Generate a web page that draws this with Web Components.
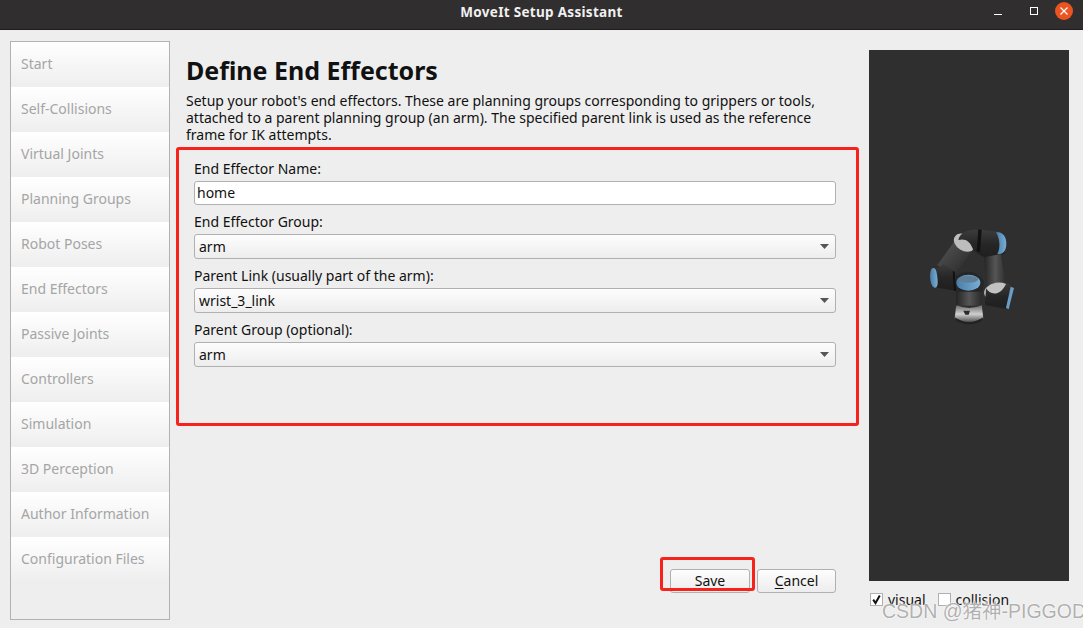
<!DOCTYPE html>
<html>
<head>
<meta charset="utf-8">
<title>MoveIt Setup Assistant</title>
<style>
    html, body { margin: 0; padding: 0; background: #eeeeee; }
    body { font-family: "Noto Sans", "Noto Sans CJK SC", sans-serif; }
</style>
</head>
<body>
<setup-app></setup-app>

<script>
const FONT = `"Noto Sans", "Noto Sans CJK SC", sans-serif`;

class TitleBar extends HTMLElement {
    constructor() {
        super();
        this.attachShadow({ mode: "open" }).innerHTML = `
            <style>
    :host { display: flex; height: 29px; background: #302e2e; border-bottom: 1px solid #1e1d1d; position: relative; align-items: center; justify-content: center; }
    .title { color: #f0f0f0; font: bold 13.5px ${FONT}; letter-spacing: .3px; margin-top: -5px; }
    .controls { position: absolute; right: 4px; top: 2px; display: flex; align-items: center; }
    .controls svg { display: block; }
</style>
            <div class="title"><slot></slot></div>
            <div class="controls">
                <svg width="107" height="22" viewBox="0 0 107 22">
                    <rect x="22" y="12" width="8" height="1" fill="#fff"/>
                    <rect x="58.5" y="5.5" width="7" height="7" fill="none" stroke="#fff" stroke-width="1"/>
                    <circle cx="92" cy="9" r="9" fill="#e95420"/>
                    <path d="M88.5 5.5 L95.5 12.5 M95.5 5.5 L88.5 12.5" stroke="#fff" stroke-width="1.2"/>
                </svg>
            </div>`;
    }
}
customElements.define("title-bar", TitleBar);

class NavItem extends HTMLElement {
    constructor() {
        super();
        this.attachShadow({ mode: "open" }).innerHTML = `
            <style>
    :host { display: flex; align-items: center; height: 45px; box-sizing: border-box; padding: 0 0 2px 10px; background: linear-gradient(#ffffff, #eeeeee); color: #a5a5a5; font-size: 14px; }
</style>
            <slot></slot>`;
    }
}
customElements.define("nav-item", NavItem);

class NavSide extends HTMLElement {
    constructor() {
        super();
        this.attachShadow({ mode: "open" }).innerHTML = `
            <style>
    :host { display: flex; flex-direction: column; width: 160px; height: 579px; box-sizing: border-box; border: 1px solid #b2b2b2; background: #eeeeee; flex: none; }
</style>
            <slot></slot>`;
    }
}
customElements.define("nav-side", NavSide);

class TextField extends HTMLElement {
    constructor() {
        super();
        this.attachShadow({ mode: "open" }).innerHTML = `
            <style>
    :host { display: flex; align-items: center; height: 24px; box-sizing: border-box; padding: 0 0 1px 2px; background: #fff; border: 1px solid #b0b0b0; border-radius: 3px; color: #111; font-size: 14px; }
</style>
            <slot></slot>`;
    }
}
customElements.define("text-field", TextField);

class ComboBox extends HTMLElement {
    constructor() {
        super();
        this.attachShadow({ mode: "open" }).innerHTML = `
            <style>
    :host { display: flex; align-items: center; justify-content: space-between; height: 25px; box-sizing: border-box; padding: 0 6px 1px 4px; background: linear-gradient(#fdfdfd, #ededed); border: 1px solid #b0b0b0; border-radius: 3px; color: #111; font-size: 14px; }
    svg { display: block; margin-top: 1px; }
</style>
            <span><slot></slot></span>
            <svg width="9" height="5" viewBox="0 0 9 5"><path d="M0 0H9L4.5 5Z" fill="#555"/></svg>`;
    }
}
customElements.define("combo-box", ComboBox);

class FormRow extends HTMLElement {
    constructor() {
        super();
        this.attachShadow({ mode: "open" }).innerHTML = `
            <style>
    :host { display: block; margin-bottom: 5px; }
    .label { height: 24px; line-height: 24px; color: #111; font-size: 14px; }
</style>
            <div class="label">${this.getAttribute("label")}</div>
            <slot></slot>`;
    }
}
customElements.define("form-row", FormRow);

class PushButton extends HTMLElement {
    constructor() {
        super();
        this.attachShadow({ mode: "open" }).innerHTML = `
            <style>
    :host { display: flex; align-items: center; justify-content: center; height: 24px; box-sizing: border-box; padding-bottom: 1px; background: linear-gradient(#fdfdfd, #ededed); border: 1px solid #b0b0b0; border-radius: 3px; color: #111; font-size: 14px; }
    ::slotted(u) { text-underline-offset: 2px; }
</style>
            <slot></slot>`;
    }
}
customElements.define("push-button", PushButton);

class CheckOption extends HTMLElement {
    constructor() {
        super();
        const on = this.hasAttribute("checked");
        this.attachShadow({ mode: "open" }).innerHTML = `
            <style>
    :host { display: flex; align-items: center; gap: 5px; color: #111; font-size: 14px; }
    .box { width: 13px; height: 13px; box-sizing: border-box; border: 1px solid #b0b0b0; background: #fff; }
    svg { display: block; }
</style>
            <div class="box">${on ? `<svg width="11" height="11" viewBox="0 0 11 11"><path d="M2.2 5.6 L4.5 9 L8.8 1.6" fill="none" stroke="#111" stroke-width="2"/></svg>` : ""}</div>
            <slot></slot>`;
    }
}
customElements.define("check-option", CheckOption);

class RobotView extends HTMLElement {
    constructor() {
        super();
        this.attachShadow({ mode: "open" }).innerHTML = `
            <style>
    :host { display: block; width: 200px; height: 531px; background: #302f2f; position: relative; flex: none; }
    svg { position: absolute; left: 41px; top: 170px; }
</style>
            <svg width="110" height="120" viewBox="0 0 330 360">
                <defs>
                    <linearGradient id="bar" x1="0" y1="0" x2="1" y2="0">
                        <stop offset="0" stop-color="#242424"/><stop offset=".5" stop-color="#555"/><stop offset="1" stop-color="#2a2a2a"/>
                    </linearGradient>
                    <linearGradient id="barUp" x1="0" y1="0" x2="1" y2="1">
                        <stop offset="0" stop-color="#5a5a5a"/><stop offset="1" stop-color="#232323"/>
                    </linearGradient>
                    <linearGradient id="joint" x1="0" y1="0" x2="0" y2="1">
                        <stop offset="0" stop-color="#3c3c3c"/><stop offset=".5" stop-color="#262626"/><stop offset="1" stop-color="#1e1e1e"/>
                    </linearGradient>
                    <linearGradient id="blue" x1="0" y1="0" x2="1" y2="0">
                        <stop offset="0" stop-color="#4b7ea6"/><stop offset="1" stop-color="#78aed6"/>
                    </linearGradient>
                    <linearGradient id="collar" x1="0" y1="0" x2="0" y2="1">
                        <stop offset="0" stop-color="#6c6c6c"/><stop offset=".5" stop-color="#d0d0d0"/><stop offset="1" stop-color="#444"/>
                    </linearGradient>
                </defs>
                <path d="M140 55 L192 85 L130 168 L82 135 Z" fill="url(#barUp)"/>
                <ellipse cx="163" cy="68" rx="34" ry="24" transform="rotate(32 163 68)" fill="#bdbdbd"/>
                <path d="M145 60 C150 35 180 26 215 29 L270 36 L285 100 L240 118 C215 110 200 100 190 90 C180 62 165 55 145 60 Z" fill="url(#joint)"/>
                <path d="M205 28 L215 29 L210 96 L200 94 Z" fill="#111"/>
                <path d="M258 37 C285 34 292 60 288 82 C284 100 272 104 262 102 C272 84 270 56 258 37 Z" fill="url(#blue)"/>
                <path d="M222 112 L272 102 L290 210 L232 225 Z" fill="url(#bar)"/>
                <ellipse cx="262" cy="214" rx="40" ry="26" transform="rotate(-10 262 214)" fill="#c2c2c2"/>
                <path d="M228 205 C240 225 270 232 290 188 C306 198 312 205 306 232 L296 268 L225 255 Z" fill="url(#joint)"/>
                <path d="M302 200 L312 204 L296 268 L288 264 Z" fill="#6a9cc4"/>
                <path d="M62 160 C62 146 72 144 82 146 L100 132 L135 155 L138 212 L90 205 L70 200 C62 190 60 175 62 160 Z" fill="url(#joint)"/>
                <path d="M68 144 C56 148 58 200 74 203 C84 204 84 190 82 172 C80 155 78 142 68 144 Z" fill="url(#blue)"/>
                <path d="M134 155 L138 212 L132 212 L128 153 Z" fill="#111"/>
                <rect x="138" y="165" width="78" height="92" fill="url(#bar)"/>
                <path d="M140 172 C150 150 200 145 222 185 L218 215 L140 215 Z" fill="#262626"/>
                <ellipse cx="175" cy="188" rx="36" ry="24" fill="url(#blue)"/>
                <ellipse cx="175" cy="178" rx="30" ry="10" fill="#5f7f99"/>
                <path d="M140 256 Q177 272 216 256 L216 262 L220 295 Q177 322 134 295 L138 262 Z" fill="url(#collar)"/>
                <path d="M134 292 Q177 320 220 292 L214 304 Q177 322 140 304 Z" fill="#222"/>
                <path d="M160 272 L180 272 L176 284 L166 284 Z" fill="#2b2b2b"/>
            </svg>`;
    }
}
customElements.define("robot-view", RobotView);

class NoteFrame extends HTMLElement {
    constructor() {
        super();
        const b = ["left", "top", "width", "height"].map(k => `${k}: ${this.getAttribute(k)}px;`).join(" ");
        this.attachShadow({ mode: "open" }).innerHTML = `
            <style>
    :host { display: block; position: absolute; ${b} box-sizing: border-box; border: 3px solid #f5231b; border-radius: 3px; pointer-events: none; }
</style>`;
    }
}
customElements.define("note-frame", NoteFrame);

class SetupApp extends HTMLElement {
    constructor() {
        super();
        const navs = ["Start", "Self-Collisions", "Virtual Joints", "Planning Groups", "Robot Poses", "End Effectors", "Passive Joints", "Controllers", "Simulation", "3D Perception", "Author Information", "Configuration Files"];
        this.attachShadow({ mode: "open" }).innerHTML = `
            <style>
    :host { display: block; position: relative; width: 1083px; height: 628px; overflow: hidden; background: #eeeeee; font-family: ${FONT}; }
    .body { display: flex; height: 598px; box-sizing: border-box; padding: 11px 14px 0 10px; }
    .main { width: 650px; margin-left: 16px; flex: none; display: flex; flex-direction: column; height: 552px; }
    h1 { margin: 12px 0 0; height: 34px; line-height: 34px; font-size: 25px; font-weight: bold; color: #111; }
    .desc { margin: 5px 0 0; font-size: 14px; line-height: 17px; color: #111; }
    .form { margin: 14px 0 0 8px; }
    .actions { margin-top: auto; display: flex; justify-content: flex-end; gap: 7px; }
    .actions push-button:first-child { width: 80px; }
    .actions push-button:last-child { width: 79px; }
    .right { margin-left: 33px; margin-top: 9px; width: 200px; flex: none; }
    .checks { display: flex; gap: 12px; margin: 9px 0 0 1px; height: 18px; }
    .mark { position: absolute; left: 882px; top: 599px; font-size: 19.5px; line-height: 24px; color: rgba(150,150,150,.75); text-shadow: 0 0 1px #fff, 0 0 2px #fff; white-space: nowrap; font-family: "Liberation Sans", "Noto Sans CJK SC", sans-serif; }
</style>
            <title-bar>MoveIt Setup Assistant</title-bar>
            <div class="body">
                <nav-side>${navs.map(n => `<nav-item>${n}</nav-item>`).join("")}</nav-side>
                <div class="main">
                    <h1>Define End Effectors</h1>
                    <p class="desc">Setup your robot's end effectors. These are planning groups corresponding to grippers or tools, attached to a parent planning group (an arm). The specified parent link is used as the reference frame for IK attempts.</p>
                    <div class="form">
                        <form-row label="End Effector Name:"><text-field>home</text-field></form-row>
                        <form-row label="End Effector Group:"><combo-box>arm</combo-box></form-row>
                        <form-row label="Parent Link (usually part of the arm):"><combo-box>wrist_3_link</combo-box></form-row>
                        <form-row label="Parent Group (optional):"><combo-box>arm</combo-box></form-row>
                    </div>
                    <div class="actions">
                        <push-button><u>S</u>ave</push-button>
                        <push-button><u>C</u>ancel</push-button>
                    </div>
                </div>
                <div class="right">
                    <robot-view></robot-view>
                    <div class="checks">
                        <check-option checked>visual</check-option>
                        <check-option>collision</check-option>
                    </div>
                </div>
            </div>
            <note-frame left="176" top="147" width="683" height="279"></note-frame>
            <note-frame left="660" top="557" width="95" height="34"></note-frame>
            <div class="mark">CSDN @猪神-PIGGOD</div>`;
    }
}
customElements.define("setup-app", SetupApp);
</script>
</body>
</html>
